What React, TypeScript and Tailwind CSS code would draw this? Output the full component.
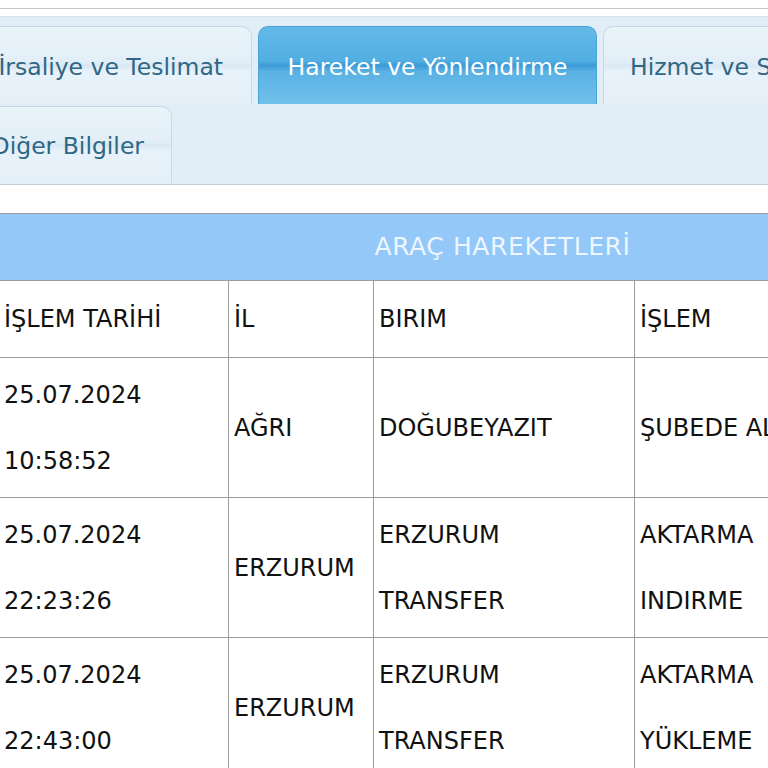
import React from "react";

const font = { fontFamily: '"DejaVu Sans", "Noto Sans", sans-serif' };

function Tab({ label, active, w, align }: { label: string; active?: boolean; w: string; align: string }) {
  return (
    <div
      className={
        "h-full shrink-0 flex items-center whitespace-nowrap rounded-t-[10px] border border-b-0 pt-[4px] text-[23.5px] " +
        w +
        " " +
        align +
        " " +
        (active
          ? "border-[#4aa3d8] text-white bg-[linear-gradient(to_bottom,#64b9e8_0%,#52aee2_44%,#3d9ad6_50%,#5ab2e4_58%,#70c1ea_100%)]"
          : "border-[#c9d8e4] text-[#2f6784] bg-[linear-gradient(to_bottom,#e9f3fa_0%,#e3eff8_45%,#d9e8f3_50%,#e8f2fa_58%,#e4eff8_100%)]")
      }
    >
      {label}
    </div>
  );
}

function Cell({ lines, first }: { lines: string[]; first?: boolean }) {
  return (
    <td className={"border border-[#9c9c9c] align-middle " + (first ? "pl-[6px]" : "pl-[5px]")}>
      {lines.map((l, i) => (
        <div key={i} className="leading-[66px] whitespace-nowrap">
          {l}
        </div>
      ))}
    </td>
  );
}

export default function App() {
  const rows: string[][][] = [
    [["25.07.2024", "10:58:52"], ["AĞRI"], ["DOĞUBEYAZIT"], ["ŞUBEDE ALINDI"]],
    [["25.07.2024", "22:23:26"], ["ERZURUM"], ["ERZURUM", "TRANSFER"], ["AKTARMA", "INDIRME"]],
    [["25.07.2024", "22:43:00"], ["ERZURUM"], ["ERZURUM", "TRANSFER"], ["AKTARMA", "YÜKLEME"]],
  ];
  return (
    <div className="w-[768px] h-[768px] overflow-hidden bg-white relative" style={font}>
      <div className="w-[1100px] -ml-[40px]">
        <div className="h-[8px]" />
        <div className="h-[1px] bg-[#c6c6c6]" />
        <div className="h-[7px] bg-white" />
        <div className="h-[1px] bg-[#d6e1ea]" />
        <div className="bg-[#e1edf7] pt-[9px] pl-[4px] border-b border-[#c3cdd5] h-[168px] flex flex-col gap-[2px]">
          <div className="h-[78px] flex gap-[6px]">
            <Tab label="İrsaliye ve Teslimat" w="w-[288px]" align="justify-end pr-[28px]" />
            <Tab label="Hareket ve Yönlendirme" w="w-[339px]" align="justify-center" active />
            <Tab label="Hizmet ve Sigorta" w="w-[300px]" align="justify-start pl-[26px]" />
          </div>
          <div className="h-[77px] flex">
            <Tab label="Diğer Bilgiler" w="w-[208px]" align="justify-end pr-[27px]" />
          </div>
        </div>
        <div className="h-[28px]" />
        <table className="table-fixed border-collapse ml-[37px] w-[1010px] text-[24px] text-[#111]">
          <colgroup>
            <col className="w-[231px]" />
            <col className="w-[145px]" />
            <col className="w-[261px]" />
            <col className="w-[373px]" />
          </colgroup>
          <thead>
            <tr>
              <th
                colSpan={4}
                className="h-[67px] bg-[#93c8f8] border border-[#9c9c9c] text-[#eef6ff] font-normal text-[25px] tracking-[0.6px] text-center"
              >
                ARAÇ HAREKETLERİ
              </th>
            </tr>
          </thead>
          <tbody>
            <tr className="h-[77px]">
              <Cell lines={["İŞLEM TARİHİ"]} first />
              <Cell lines={["İL"]} />
              <Cell lines={["BIRIM"]} />
              <Cell lines={["İŞLEM"]} />
            </tr>
            {rows.map((r, i) => (
              <tr key={i} className="h-[140px]">
                {r.map((c, j) => (
                  <Cell key={j} lines={c} first={j === 0} />
                ))}
              </tr>
            ))}
          </tbody>
        </table>
      </div>
    </div>
  );
}
